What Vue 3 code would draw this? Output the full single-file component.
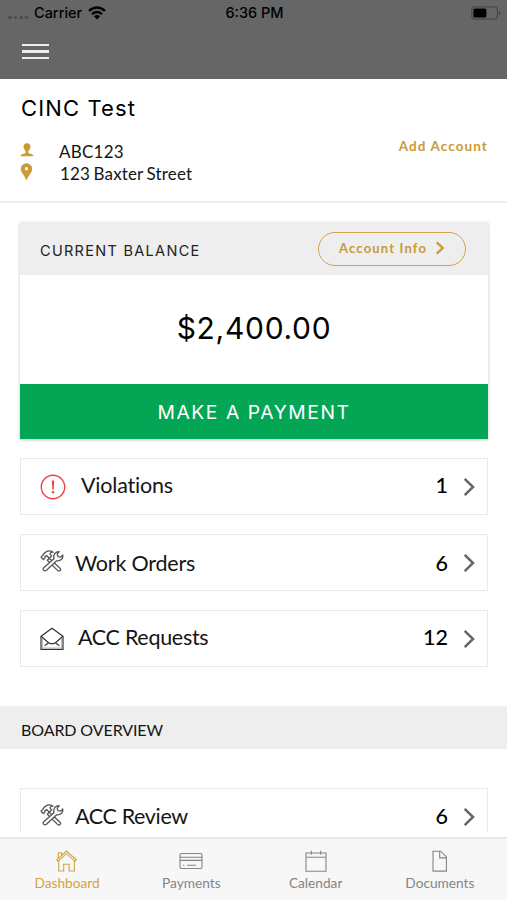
<script setup>
const rows = [
  { label: 'Violations', count: 1, icon: 'alert' },
  { label: 'Work Orders', count: 6, icon: 'tools' },
  { label: 'ACC Requests', count: 12, icon: 'mail' },
]
const boardRows = [{ label: 'ACC Review', count: 6, icon: 'tools' }]
const tabs = [
  { label: 'Dashboard', icon: 'home', active: true },
  { label: 'Payments', icon: 'card' },
  { label: 'Calendar', icon: 'calendar' },
  { label: 'Documents', icon: 'doc' },
]
</script>

<template>
  <div class="screen">
    <header class="top">
      <div class="status">
        <div class="carrier">
          <span class="dots"><i v-for="n in 4" :key="n"></i></span>
          <span class="carrier-name">Carrier</span>
          <svg class="wifi" viewBox="0 0 18 14" width="18" height="14">
            <g fill="none" stroke="#000" stroke-width="2.5">
              <path d="M1 4.9Q9-1.9 17 4.9" />
              <path d="M4 8.1Q9 3.9 14 8.1" />
            </g>
            <path d="M9 13.4L5.9 10.2Q9 7.8 12.1 10.2Z" />
          </svg>
        </div>
        <span class="time">6:36 PM</span>
        <svg class="battery" viewBox="0 0 30 14" width="30" height="14">
          <rect x=".8" y=".8" width="25.6" height="12.4" rx="3" fill="none" stroke="#484848" stroke-width="1.2" />
          <rect x="2.4" y="2.4" width="13" height="9.2" rx="1.5" />
          <path d="M27.8 5v4q1.7-.4 1.7-2t-1.7-2" fill="#444" />
        </svg>
      </div>
      <div class="menu"><i></i><i></i><i></i></div>
    </header>

    <section class="profile">
      <h1>CINC Test</h1>
      <div class="profile-body">
        <div class="facts">
          <div class="fact">
            <svg viewBox="0 0 14 14" width="14" height="14" fill="#c99a35">
              <path d="M7 .3C4.700 .3 3.500 1.700 3.500 3.600c0 1.700.9 3.500 2.100 4.400v2C4.400 11 .8 10.800.6 13.300h12.800C13.200 10.800 9.600 11 8.400 10V8c1.200-.9 2.100-2.700 2.100-4.400C10.500 1.700 9.300.3 7 .3Z" />
            </svg>
            <span class="code">ABC123</span>
          </div>
          <div class="fact">
            <svg viewBox="0 0 14 17" width="14" height="17" fill="#c99a35">
              <path fill-rule="evenodd" d="M6.500 .3A5.700 5.700 0 0 0 .8 6c0 3.200 3.300 5.800 5.200 10.400q.5.700 1 0C8.900 11.800 12.200 9.200 12.200 6A5.700 5.700 0 0 0 6.500 .3Zm0 3.700a1.700 1.700 0 1 1 0 3.400 1.700 1.700 0 0 1 0-3.400Z" />
            </svg>
            <span class="street">123 Baxter Street</span>
          </div>
        </div>
        <a class="add">Add Account</a>
      </div>
    </section>

    <main class="content">
      <section class="balance">
        <div class="balance-head">
          <h2>CURRENT BALANCE</h2>
          <button class="info">
            <span>Account Info</span>
            <svg viewBox="0 0 10 14" width="10" height="14"><path d="M1.700 1.300L7.800 7l-6.100 5.700" fill="none" stroke="#c99a35" stroke-width="2.300" /></svg>
          </button>
        </div>
        <div class="amount">$2,400.00</div>
        <button class="pay">MAKE A PAYMENT</button>
      </section>

      <template v-for="(group, g) in [rows, boardRows]" :key="g">
        <h3 v-if="g === 1" class="band">BOARD OVERVIEW</h3>
        <div class="rows" :class="{ board: g === 1 }">
          <div v-for="row in group" :key="row.label" class="row" :class="row.icon">
            <div class="row-icon">
              <svg v-if="row.icon === 'alert'" viewBox="0 0 26 26" width="26" height="26">
                <circle cx="13" cy="13" r="11.700" fill="none" stroke="#ef4141" stroke-width="1.400" />
                <path d="M11.800 6.500h2.400l-.5 9h-1.400Z" fill="#ef4141" />
                <circle cx="13" cy="18.200" r="1.200" fill="#ef4141" />
              </svg>
              <svg v-else-if="row.icon === 'tools'" viewBox="0 0 24 22" width="24" height="22" fill="#fff" stroke="#555" stroke-width="1.300" stroke-linejoin="round">
                <path d="M9.200 8.300L20 18.200q1.300 1.500.1 2.400t-2.600-.2L7.300 10.300Z" />
                <path d="M3.700 17.700L14 8.700C13 5 15.300 1.500 19.200 1.600L17.200 4.200l.9 2.500 2.700.4L22.700 4.900C23.400 8.900 20.400 11.400 16.600 10.800L6.500 20.300Q5 21.500 3.700 20.300T3.700 17.700Z" />
                <path d="M1 7.100L3.300 9.500 5 8.100 4.900 6.700 6.900 5.700 9.200 8.100 11.700 5.900 9.800 3.900C10.300 2.700 11.400 2.200 13.100 2.200 10.300.5 6.800.8 4.900 2.700L3.500 4.300 2.600 5.500Z" />
              </svg>
              <svg v-else viewBox="0 0 24 24" width="24" height="24" fill="none" stroke="#333" stroke-width="1.200" stroke-linejoin="round">
                <path d="M1 9.200L12 1.300 23 9.200V22.400H1Z" />
                <path d="M1 9.300L8.600 15.700 10.500 16.600h3L15.400 15.700 23 9.300M4.500 18.900L8.600 15.700M19.500 18.900L15.400 15.700" />
                <path d="M2.500 11v10h19V11" stroke="#aaa" stroke-width=".8" />
              </svg>
            </div>
            <span class="label">{{ row.label }}</span>
            <span class="count">{{ row.count }}</span>
            <svg class="chev" viewBox="0 0 12 20" width="12" height="20"><path d="M1.700 1.900L10 10 1.700 18.100" fill="none" stroke="#666" stroke-width="2.500" /></svg>
          </div>
        </div>
      </template>
    </main>

    <nav class="tabs">
      <div v-for="tab in tabs" :key="tab.label" class="tab" :class="{ active: tab.active }">
        <svg viewBox="0 0 24 24" width="24" height="24" fill="none" stroke="currentColor" stroke-width="1.100">
          <g v-if="tab.icon === 'home'">
            <path d="M1.700 10.900L11.500 2.100 21.300 10.900l-1.300 1.400L11.500 4.700l-8.500 7.600ZM3.200 9.200V3.700h3.300v2.500" />
            <path d="M3.700 11.600V22H8.700V15.300h5.400V22h5.300V11.600" />
          </g>
          <g v-else-if="tab.icon === 'card'">
            <rect x="1" y="4.500" width="22" height="15" rx="1.500" />
            <path d="M1 8.200h22M1 11.400h22M8 16.300h9M4 16.300h1.300" />
          </g>
          <g v-else-if="tab.icon === 'calendar'">
            <path d="M2 4h20v18.200H2ZM2 8.200h20M7.300 1.700v4M16.700 1.700v4" />
          </g>
          <g v-else>
            <path d="M5 2.200h7.700l5.700 5.700v14.200H5ZM11.700 2.200v6.700h6.700" />
          </g>
        </svg>
        <span>{{ tab.label }}</span>
      </div>
    </nav>
  </div>
</template>

<style>
body { background: #fff; }
</style>

<style scoped>
* { box-sizing: border-box; }
h1, h2, h3 { margin: 0; font-weight: 400; }
button { margin: 0; border: 0; background: none; }
svg { display: block; flex: none; }
.screen { width: 507px; height: 900px; display: flex; flex-direction: column; overflow: hidden; font-family: Lato, sans-serif; font-variant-ligatures: none; color: #151515; background: #fff; }
.top { flex: none; height: 79px; background: #666; }
.status { height: 26px; display: grid; grid-template-columns: 1fr auto 1fr; align-items: center; padding: 0 6px 0 8px; font: 500 14.5px/26px Inter, sans-serif; color: #000; }
.carrier { display: flex; align-items: center; }
.dots { display: flex; gap: 2px; width: 26px; padding-top: 9px; }
.dots i { width: 3.500px; height: 3px; border-radius: 50%; background: #4c4c4c; }
.wifi { margin-left: 6px; }
.battery { justify-self: end; }
.menu { width: 27px; margin: 17.500px 0 0 22px; display: grid; gap: 4px; }
.menu i { height: 2.500px; background: #eee; }

.profile { flex: none; height: 124px; padding: 14px 20px 0 21px; border-bottom: 2px solid #eee; }
h1 { font: 400 22px/30px Inter, sans-serif; letter-spacing: 1.120px; color: #000; }
.profile-body { display: flex; justify-content: space-between; padding-top: 17px; }
.fact { display: flex; align-items: center; height: 22px; font-size: 17px; line-height: 22px; }
.fact svg { width: 14px; margin: -3px 25px 0 -1px; }
.code { letter-spacing: .25px; padding-top: 1px; }
.street { letter-spacing: .15px; word-spacing: -1px; padding: 1px 0 0 1px; }
.add { color: #c99a35; font-size: 13.500px; font-weight: 700; line-height: 18px; letter-spacing: 1.100px; margin: -3px -1px 0 0; }

.content { flex: none; height: 630px; padding-top: 19px; overflow: hidden; }
.balance { height: 217px; margin: 0 19px 0 20px; display: flex; flex-direction: column; background: #fff; box-shadow: 0 1px 3px rgba(0, 0, 0, .24); }
.balance-head { height: 53px; background: #eee; display: flex; align-items: center; justify-content: space-between; padding: 0 22px 0 20px; }
h2 { font: 400 14.500px/20px Inter, sans-serif; letter-spacing: 1.300px; padding-top: 4px; color: #222; }
.info { width: 148px; height: 34px; border: 1.500px solid #cfa54c; border-radius: 17px; display: flex; align-items: center; gap: 8px; padding: 0 0 2px 20px; color: #c99a35; font: 700 13px/18px Lato, sans-serif; letter-spacing: 1.170px; white-space: nowrap; }
.amount { height: 109px; text-align: center; font: 400 30px/106px Inter, sans-serif; letter-spacing: .7px; color: #000; }
.pay { height: 55px; padding: 0; background: #04a655; color: #fff; font: 400 19.300px/56px Inter, sans-serif; letter-spacing: 1.550px; }

.rows { display: grid; gap: 19px; padding: 19px 19px 0 20px; }
.row { height: 57px; border: 1px solid #e9e9e9; display: flex; align-items: center; padding: 0 12px 0 19px; font-size: 21.500px; line-height: 28px; color: #151515; }
.label { flex: 1; letter-spacing: -.2px; }
.row-icon { width: 35px; }
.alert .row-icon { width: 41px; }
.mail .row-icon { width: 38px; }
.tools .row-icon { padding-bottom: 4px; }
.alert .label, .alert .count { padding-bottom: 3px; }
.mail .label, .mail .count { padding-bottom: 4px; }
.mail .label { letter-spacing: -.3px; }
.board .label { letter-spacing: -.35px; }
.count { font-weight: 500; color: #000; margin-right: 15px; }
.band { height: 43px; margin-top: 39px; background: #eee; padding-left: 21px; font-size: 16px; line-height: 47px; letter-spacing: -.1px; }
.board { padding-top: 39px; }
.board .label, .board .count { padding-bottom: 2px; }

.tabs { margin-top: 4px; height: 63px; flex: none; border-top: 2px solid #e8e8e8; background: #f7f7f7; display: flex; padding: 0 5px; }
.tab { flex: 1; display: flex; flex-direction: column; align-items: center; padding-top: 10px; color: #858585; font-size: 13.700px; line-height: 18px; }
.tab.active { color: #d1a344; }
.tab span { margin-top: 1px; }
</style>
